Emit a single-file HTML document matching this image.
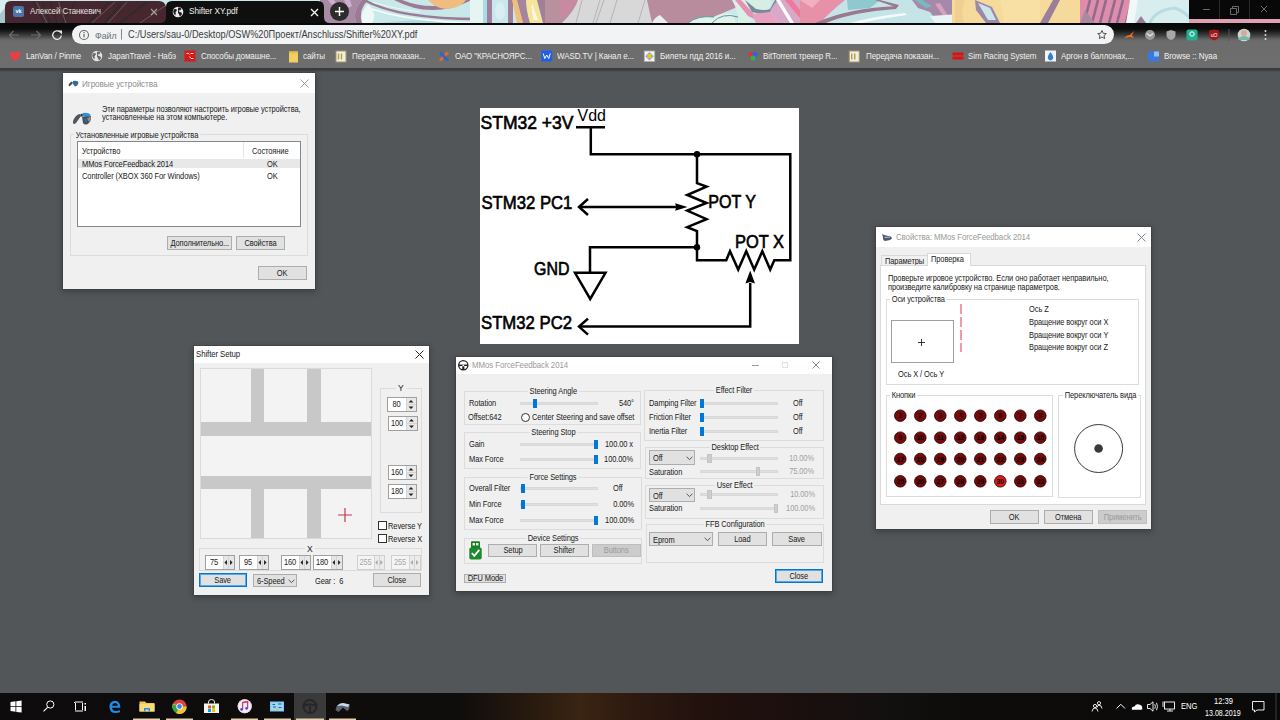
<!DOCTYPE html>
<html><head><meta charset="utf-8">
<style>
*{margin:0;padding:0;box-sizing:border-box}
html,body{width:1280px;height:720px;overflow:hidden;background:#525659;font-family:"Liberation Sans",sans-serif;position:relative}
.a{position:absolute}
.t{position:absolute;white-space:nowrap;line-height:1}
/* chrome */
#toolbar{left:0;top:23px;width:1280px;height:45px;background:linear-gradient(180deg,#080808 0,#0c0c0c 6px,#3a3a3a 12px,#626262 16px,#6c6c6c 18px,#6e6e6e 45px)}
#bmline{left:0;top:68px;width:1280px;height:4px;background:linear-gradient(180deg,#383b3e 0,#3a3d40 2px,#484b4e 3px,#525659 4px)}
.bm{color:#f0f0f0;font-size:9px;top:51.5px;letter-spacing:-0.1px;transform:scaleX(0.89);transform-origin:0 0}
.dlg{position:absolute;background:#f0f0f0;box-shadow:0 0 0 1px rgba(50,50,50,0.3),0 2px 6px 1px rgba(0,0,0,0.25)}
.tb{position:absolute;left:0;top:0;right:0;background:#fff}
.f{position:absolute;white-space:nowrap;line-height:1;font-size:8.6px;letter-spacing:-0.1px;color:#1a1a1a;transform:scaleX(0.87);transform-origin:0 0}
.fr{transform-origin:100% 0}
.fc{transform-origin:50% 0}
.sx{display:inline-block;transform:scaleX(0.87)}
.gb{position:absolute;border:1px solid #dcdcdc}
.gt{position:absolute;background:#f0f0f0;padding:0 2px;font-size:8.6px;letter-spacing:-0.1px;color:#1a1a1a;line-height:1;white-space:nowrap}
.btn{position:absolute;white-space:nowrap;background:#e1e1e1;border:1px solid #adadad;font-size:8.6px;letter-spacing:-0.1px;line-height:1;color:#1a1a1a;text-align:center;display:flex;align-items:center;justify-content:center}
.btn.def{border:1px solid #0078d7;box-shadow:inset 0 0 0 1px #5aa8e8}
.btn.dis{background:#cccccc;border-color:#bfbfbf;color:#9a9a9a}
.trk{position:absolute;height:3px;background:#e2e2e2;border:0}
.thb{position:absolute;width:4px;height:9px;background:#0078d7}
.thg{position:absolute;width:4px;height:9px;background:#cfcfcf;border:1px solid #bdbdbd}
.combo{position:absolute;background:#e1e1e1;border:1px solid #adadad;font-size:8.4px;color:#202020;padding-left:3px;display:flex;align-items:center}
.spin{position:absolute;background:#fff;border:1px solid #a8a8a8;font-size:8.2px;color:#202020}
</style></head><body>

<!-- title bar -->
<svg class="a" style="left:0;top:0" width="1280" height="23" viewBox="0 0 1280 23">
 <rect width="1280" height="23" fill="#cce8ea"/>
 <rect x="0" y="0" width="8" height="23" fill="#d8eeee"/>
 <path d="M0 14L8 4L8 23L0 23Z" fill="#a8c8c8"/>
 <!-- 320-440 -->
 <rect x="320" y="0" width="165" height="23" fill="#c8e8ea"/>
 <path d="M320 0H362Q352 10 356 23H320Z" fill="#a88aa4"/>
 <path d="M328 0H334L340 8L336 10Z M344 0H350L352 6L348 8Z" fill="#cdb0d0"/>
 <path d="M356 23Q352 10 362 0H368Q358 10 362 23Z" fill="#9a7a94"/>
 <path d="M362 23Q360 12 368 4Q378 14 372 23Z" fill="#eef8f6"/>
 <path d="M394 0Q432 20 472 0H464Q432 12 402 0Z" fill="#9c7a94"/>
 <path d="M428 0Q436 9 448 9Q462 7 466 0Z" fill="#f0bc80"/>
 <path d="M364 0Q400 20 487 19" stroke="#9c7a94" stroke-width="2.4" fill="none"/>
 <path d="M372 9Q410 22 480 23" stroke="#f4fbfa" stroke-width="1.6" fill="none"/>
 <path d="M372 2Q390 8 420 12" stroke="#e8f6f6" stroke-width="1.2" fill="none"/>
 <path d="M380 23Q420 18 445 23Z" fill="#a8d8de"/>
 <rect x="470" y="0" width="16" height="23" fill="#e6f4f2"/>
 <rect x="483" y="0" width="4" height="23" fill="#a8dce4"/>
 <rect x="487" y="0" width="5" height="23" fill="#a07e9c"/>
 <path d="M492 0H510V23H492Z" fill="#c8e8ec"/>
 <ellipse cx="500" cy="11" rx="5" ry="9" fill="#d8eef2"/>
 <rect x="508" y="0" width="5" height="23" fill="#a07e9c"/>
 <path d="M512 0H517L523 23H517Z" fill="#f0c078"/>
 <path d="M517 0H527L531 23H523Z" fill="#a6849e"/>
 <path d="M526 0H537L543 23H530Q526 10 526 0Z" fill="#f6e49c"/>
 <path d="M532 3Q535 12 538 20L534 20Q531 12 532 3Z" fill="#fff8e0"/>
 <path d="M537 0H545L551 23H543Z" fill="#a08098"/>
 <rect x="545" y="0" width="33" height="23" fill="#b8909e"/>
 <!-- 560-680 -->
 <path d="M578 0Q572 12 560 20V0Z" fill="#c88aa0"/>
 <path d="M578 0H648L652 23H562Q575 10 578 0Z" fill="#d8d8d8"/>
 <path d="M582 0L576 23M600 0L593 23M604 0L596 23M617 0L610 23M645 0L638 23" stroke="#b0b0b0" stroke-width="0.9"/>
 <path d="M647 0H740L735 8Q720 14 700 23H652Z" fill="#b88c9c"/>
 <path d="M652 23Q655 17 660 15L668 23Z" fill="#e8f0ee"/>
 <!-- 680-800 -->
 <path d="M688 23Q698 15 714 17Q722 12 732 14Q735 18 736 23Z" fill="#e0f2ea"/>
 <path d="M688 23Q698 15 714 17M712 23Q722 12 738 17" stroke="#5a98a0" stroke-width="1" fill="none"/>
 <path d="M732 0H745Q748 6 752 12L760 14L748 23H738Q740 14 732 0Z" fill="#d8f0e8"/>
 <path d="M735 0H741L755 15L770 23H762L748 16Z" fill="#e890b0"/>
 <path d="M744 0H770Q772 6 768 10Q758 12 752 8Z" fill="#d6eee6"/>
 <path d="M745 0L756 9Q765 11 770 9L775 0H778L772 12L760 14L752 12Z" fill="#7a8a98"/>
 <path d="M752 14L770 12L778 23H756Z" fill="#e8a0c0"/>
 <path d="M770 12Q772 6 778 0H800V23H778Z" fill="#d8a8c8"/>
 <path d="M776 0H780L794 23H790Z" fill="#ffffff"/>
 <path d="M785 0H792L800 10V18Z" fill="#f07898"/>
 <!-- 800-960 -->
 <rect x="800" y="0" width="48" height="23" fill="#e890a8"/>
 <path d="M800 0H820L812 8Z" fill="#f0b0c0"/>
 <path d="M845 0H935V23H820Q830 12 845 0Z" fill="#c4e4e8"/>
 <path d="M815 23Q848 8 898 6L896 9Q852 12 826 23Z" fill="#9a7890"/>
 <path d="M850 23Q875 16 905 13L907 15Q878 19 862 23Z" fill="#f2fafa"/>
 <path d="M847 0H880L870 8L848 10Z" fill="#8ec8d0"/>
 <path d="M875 0L897 7.5L899 5L880 0Z" fill="#9a7890"/>
 <path d="M912 0H956V23H938L930 12L918 8Z" fill="#a48aa8"/>
 <path d="M935 4L940 3L948 16L944 17Z" fill="#d8a0c0"/>
 <path d="M915 0L922 0L932 6L926 8Z" fill="#78b8c0"/>
 <path d="M930 16L960 14L975 23H935Z" fill="#e8f4f6"/>
 <!-- yellow -->
 <rect x="952" y="0" width="133" height="23" fill="#f6da9c"/>
 <path d="M955 0H965Q960 10 964 23H955Z" fill="#f0d090"/>
 <path d="M975 0L992 7L1000 23H986L976 10Z" fill="#9a8aa8"/>
 <path d="M978 3L990 8L996 20L988 20Z" fill="#cce4ec"/>
 <path d="M1000 0H1040V23H1004Z" fill="#f8e0a4"/>
 <path d="M1040 23L1053 0H1060L1048 23Z" fill="#9a7e9a"/>
 <!-- stripes -->
 <rect x="1080" y="0" width="56" height="23" fill="#e08cac"/>
 <path d="M1084 23L1090 0M1092 23L1098 0M1100 23L1106 0M1109 23L1115 0M1117 23L1123 0M1126 23L1132 0" stroke="#8e6c8c" stroke-width="2.6"/><path d="M1080 23L1085 10L1095 23Z" fill="#a88aa0"/>
 <rect x="1132" y="0" width="58" height="23" fill="#d8eeee"/>
 <path d="M1130 0H1138L1134 23H1126Z" fill="#f0f8f8"/>
 <path d="M1150 23Q1155 10 1175 8Q1185 12 1190 18" stroke="#b8dce4" stroke-width="3" fill="none"/><path d="M1136 23L1141 16L1146 23Z" fill="#9a7a98"/>
 <!-- window controls -->
 <rect x="1189" y="0" width="91" height="19" fill="#080808"/>
 <rect x="1189" y="19" width="91" height="4" fill="#e0a0b4"/>
 <rect x="1219" y="0" width="1" height="19" fill="#2a2a2a"/>
 <rect x="1249" y="0" width="1" height="19" fill="#2a2a2a"/>
 <rect x="1203" y="9" width="7" height="1" fill="#6a6a6a"/>
 <path d="M1230.5 8.5H1236.5V14.5H1230.5Z M1232.5 8.5V6.5H1238.5V12.5H1236.5" fill="none" stroke="#6a6a6a" stroke-width="1"/>
 <path d="M1261 6L1267 12M1267 6L1261 12" stroke="#6a6a6a" stroke-width="1"/>
 <!-- inactive tab -->
 <path d="M5 23V7Q5 1 11 1H159Q165 1 166 7V23Z" fill="#47272f"/>
 <path d="M33.5 2L44 23M42.5 2L50 23M50.5 2L57 23M62 23L75.5 2M88 23L109 2M104 23L123 2M120 23L147 2" stroke="#2e2a2c" stroke-width="1.6"/>
 <path d="M36.5 2L47 23M58.5 2L66 23M92 23L115 2M108 23L127 2M140 23L165 6" stroke="#6a5e62" stroke-width="0.9"/>
 <!-- active tab -->
 <path d="M160 23Q166 23 166 17V7Q166 1 172 1H318Q324 1 324 7V17Q324 23 330 23Z" fill="#0f0f0f"/>
</svg>
<div class="a" style="left:13px;top:6px;width:11px;height:11px;background:#4a76a8;border-radius:2px;color:#fff;font-size:5.5px;font-weight:bold;text-align:center;line-height:11px">vk</div>
<div class="t" style="left:29.5px;top:6.5px;font-size:9.2px;letter-spacing:-0.1px;color:#e8e0e0;transform:scaleX(0.87);transform-origin:0 0">Алексей Станкевич</div>
<svg class="a" style="left:150px;top:8px" width="8" height="8"><path d="M1 1L7 7M7 1L1 7" stroke="#a8a0a0" stroke-width="1.1"/></svg>
<svg class="a" style="left:172px;top:6px" width="12" height="12" viewBox="0 0 12 12"><circle cx="6" cy="6" r="5.3" fill="#ececec"/><path d="M2.2 3.2Q3.5 2.5 4.8 3.5Q5.2 5 4 5.5Q3 6.2 3.8 7.5L3.2 9.5Q1 7.5 1.2 5Z M6.5 1.2Q8.5 1.5 9.5 3L8 4.5Q7 3.8 6.5 4.8Q7.2 6.5 9 6.2Q10.2 6.8 9.8 8.5Q8.8 10 7.5 10.5Q7.8 8.8 6.8 8Q5.8 7 6 5.5Q5.5 3.2 6.5 1.2Z" fill="#1a1a1a"/></svg>
<div class="t" style="left:189px;top:6.5px;font-size:9.2px;letter-spacing:-0.1px;color:#f0f0f0;transform:scaleX(0.9);transform-origin:0 0">Shifter XY.pdf</div>
<svg class="a" style="left:310px;top:7.5px" width="9" height="9"><path d="M1 1L8 8M8 1L1 8" stroke="#f0f0f0" stroke-width="1.4"/></svg>
<div class="a" style="left:330px;top:2px;width:19px;height:19px;border-radius:50%;background:#2c2c2c"></div>
<svg class="a" style="left:334px;top:6px" width="11" height="11"><path d="M5.5 1V10M1 5.5H10" stroke="#fff" stroke-width="1.5"/></svg>

<!-- toolbar -->
<div id="toolbar" class="a"></div>
<div id="bmline" class="a"></div>
<svg class="a" style="left:0;top:23px" width="1280" height="45" viewBox="0 23 1280 45">
 <path d="M19 35H9.5M13.5 31L9.5 35L13.5 39" stroke="#6e6e6e" stroke-width="1.1" fill="none"/>
 <path d="M31 35H40.5M36.5 31L40.5 35L36.5 39" stroke="#6e6e6e" stroke-width="1.1" fill="none"/>
 <path d="M61.3 35.5A4.3 4.3 0 1 1 60 32" stroke="#e8e8e8" stroke-width="1.3" fill="none"/><path d="M58 30.5H62V34.5Z" fill="#e8e8e8"/>
 <rect x="72" y="25" width="1042" height="19" rx="9.5" fill="#f1f3f4"/>
 <circle cx="84" cy="35" r="4.5" fill="none" stroke="#666" stroke-width="1.1"/><rect x="83.4" y="34" width="1.2" height="3.3" fill="#666"/><rect x="83.4" y="32" width="1.2" height="1.2" fill="#666"/>
 <rect x="121" y="29" width="0.9" height="10.6" fill="#7a7a7a"/>
 <path d="M1102 30.5L1103.3 33.3L1106.3 33.6L1104 35.6L1104.7 38.6L1102 37L1099.3 38.6L1100 35.6L1097.7 33.6L1100.7 33.3Z" fill="none" stroke="#555" stroke-width="1"/>
 <path d="M1124 38Q1127 35 1130 35L1134 31L1132 35.5L1134 38L1130 37Z" fill="#f07020"/>
 <circle cx="1150" cy="35" r="5" fill="#9a9a9a"/><path d="M1147 33.5L1150 36L1153 33.5" stroke="#e8e8e8" stroke-width="1.2" fill="none"/>
 <path d="M1171 30L1175.5 31.5V35Q1175.5 38.5 1171 40Q1166.5 38.5 1166.5 35V31.5Z" fill="#a8a8a8"/>
 <rect x="1186.5" y="29.5" width="11" height="11" rx="2" fill="#20b090"/><circle cx="1192" cy="34" r="2.2" fill="none" stroke="#fff" stroke-width="1"/>
 <path d="M1209 30.5L1214 29.5L1219 30.5V35Q1219 39 1214 40.5Q1209 39 1209 35Z" fill="#a01818"/><text x="1214" y="37" font-family="Liberation Sans" font-size="5" fill="#fff" text-anchor="middle">uO</text>
 <rect x="1228.5" y="29" width="1" height="12" fill="#555"/>
 <circle cx="1244" cy="35" r="6.3" fill="#c8d8d0"/><circle cx="1244" cy="33" r="3" fill="#d8a898"/><path d="M1238.5 38Q1244 34 1249.5 38V40H1238.5Z" fill="#78b8a8"/>
 <circle cx="1265.5" cy="31" r="1" fill="#ddd"/><circle cx="1265.5" cy="35" r="1" fill="#ddd"/><circle cx="1265.5" cy="39" r="1" fill="#ddd"/>
</svg>
<div class="t" style="left:95px;top:30.5px;font-size:9.6px;color:#707070;transform:scaleX(0.92);transform-origin:0 0">Файл</div>
<div class="t" style="left:128px;top:30px;font-size:10px;color:#3c3c3c;transform:scaleX(0.92);transform-origin:0 0">C:/Users/sau-0/Desktop/OSW%20Проект/Anschluss/Shifter%20XY.pdf</div>

<!-- bookmarks -->
<svg class="a" style="left:0;top:44px" width="1280" height="24" viewBox="0 44 1280 24">
 <g transform="translate(9 50.5)"><path d="M1 4Q1 1 4 1Q6 1 6.5 3Q7 1 9 1Q12 1 11.5 4Q11 7 6 11Q1 7 1 4Z" fill="#e84040"/></g>
 <g transform="translate(91 50)"><circle cx="6" cy="6" r="5.3" fill="#e4e4e4"/><path d="M2.2 3.2Q3.5 2.5 4.8 3.5Q5.2 5 4 5.5Q3 6.2 3.8 7.5L3.2 9.5Q1 7.5 1.2 5Z M6.5 1.2Q8.5 1.5 9.5 3L8 4.5Q7 3.8 6.5 4.8Q7.2 6.5 9 6.2Q10.2 6.8 9.8 8.5Q8.8 10 7.5 10.5Q7.8 8.8 6.8 8Q5.8 7 6 5.5Q5.5 3.2 6.5 1.2Z" fill="#666"/></g>
 <g transform="translate(184.5 50.5)"><rect x="0" y="0" width="11" height="11" fill="#d81818"/><path d="M2 3Q4 2 5 4M6 3H9M5 6Q6 9 9 8" stroke="#fff" stroke-width="0.9" fill="none"/></g>
 <g transform="translate(288 50.5)"><rect x="1" y="1" width="9" height="11" fill="#f2d060"/><rect x="1" y="1" width="9" height="2" fill="#e8c040"/></g>
 <g transform="translate(335.5 50.5)"><rect x="0.5" y="0.5" width="10" height="11" fill="#f0f0e8" stroke="#a09870" stroke-width="1"/><path d="M3 3V9M6 3V9" stroke="#c0a030" stroke-width="1.5"/></g>
 <g transform="translate(438 50.5)"><path d="M1 9L9 1L11 3L3 11Z" fill="#e86820"/><path d="M1 3L3 1L11 9L9 11Z" fill="#2868c8"/></g>
 <g transform="translate(541.25 50.5)"><rect x="0" y="0" width="11" height="11" rx="1" fill="#2060e8"/><path d="M2 3L3.5 8L5.5 4.5L7.5 8L9 3" stroke="#fff" stroke-width="1" fill="none"/></g>
 <g transform="translate(643.75 50.5)"><rect x="0.5" y="0.5" width="10.5" height="10.5" fill="#f4f4f4" stroke="#aaa" stroke-width="0.8"/><path d="M5.75 1.5L10 5.75L5.75 10L1.5 5.75Z" fill="#7aa8d8"/><circle cx="5.75" cy="5.75" r="2.4" fill="#f0c020"/></g>
 <g transform="translate(747.5 50.5)"><circle cx="3.5" cy="4" r="2.5" fill="#e83030"/><circle cx="7.5" cy="4" r="2.5" fill="#3060e8"/><circle cx="5.5" cy="7.5" r="2.5" fill="#30b050"/></g>
 <g transform="translate(848.75 50.5)"><rect x="0.5" y="0.5" width="10" height="11" fill="#f0f0e8" stroke="#a09870" stroke-width="1"/><path d="M3 3V9M6 3V9" stroke="#c0a030" stroke-width="1.5"/></g>
 <g transform="translate(952.5 50.5)"><rect x="0" y="2" width="11" height="3" fill="#e01010"/><rect x="0" y="6" width="11" height="3" fill="#e01010"/></g>
 <g transform="translate(1045 50.5)"><rect x="0" y="0" width="11" height="11" fill="#f0f4f8"/><path d="M5.5 1.5Q9 6 8 8Q7 10 5.5 10Q4 10 3 8Q2 6 5.5 1.5Z" fill="#3080d8"/></g>
 <g transform="translate(1148 50.5)"><rect x="0" y="1" width="11" height="10" fill="#3a78e0"/><rect x="6" y="1" width="5" height="5" fill="#90c0f8"/></g>
</svg>
<div class="t bm" style="left:25.5px">LanVan / Pinme</div>
<div class="t bm" style="left:107.5px">JapanTravel - Набэ</div>
<div class="t bm" style="left:200.5px">Способы домашне...</div>
<div class="t bm" style="left:303px">сайты</div>
<div class="t bm" style="left:352px">Передача показан...</div>
<div class="t bm" style="left:454.5px">ОАО "КРАСНОЯРС...</div>
<div class="t bm" style="left:557px">WASD.TV | Канал е...</div>
<div class="t bm" style="left:659.5px">Билеты пдд 2016 и...</div>
<div class="t bm" style="left:762.5px">BitTorrent трекер R...</div>
<div class="t bm" style="left:865.5px">Передача показан...</div>
<div class="t bm" style="left:967.5px">Sim Racing System</div>
<div class="t bm" style="left:1061.25px">Аргон в баллонах,...</div>
<div class="t bm" style="left:1163.75px">Browse :: Nyaa</div>

<!-- PDF page -->
<div class="a" style="left:480px;top:108px;width:319px;height:236px;background:#fff"></div>

<svg class="a" style="left:0;top:0" width="1280" height="720" viewBox="0 0 1280 720">
<g fill="none" stroke="#000" stroke-width="2.5" stroke-linejoin="miter" stroke-linecap="butt">
<path d="M576 127.2H605M590.8 127V154.2H790.3V260.25H774.3L770.2 269.6L762.3 251.25L754.2 269.6L746.25 251.25L738.2 269.6L730 251.25L726.25 260.25H697V231L687.2 227.2L706.6 219.2L687.2 210.6L706.6 203L687.2 195L706.6 186.7L697 183.1V154.2"/>
<path d="M697 247.3H590V272.8"/>
<path d="M575 272.8H605.5L590.2 299Z"/>
<path d="M579 207H679"/>
<path d="M588 199L579 207L588 215"/>
<path d="M579 326.6H750.2V283"/>
<path d="M588 318.6L579 326.6L588 334.6"/>
</g>
<circle cx="697" cy="154.2" r="3.2"/>
<circle cx="697" cy="247.3" r="3.2"/>
<path d="M687.5 207L675 203.2Q677 207 675 210.8Z"/>
<path d="M750.2 270.4L755 283.5L750.2 282L745.4 283.5Z"/>
<g font-family="Liberation Sans" font-weight="normal" font-size="17.5" fill="#000" stroke="#000" stroke-width="0.6">
<text x="480.5" y="129" textLength="93" lengthAdjust="spacingAndGlyphs">STM32 +3V</text>
<text x="481.4" y="209.3" textLength="91" lengthAdjust="spacingAndGlyphs">STM32 PC1</text>
<text x="534" y="274.6" textLength="35.4" lengthAdjust="spacingAndGlyphs">GND</text>
<text x="481" y="328.9" textLength="91" lengthAdjust="spacingAndGlyphs">STM32 PC2</text>
<text x="708.3" y="208" textLength="47.7" lengthAdjust="spacingAndGlyphs">POT Y</text>
<text x="735" y="247.8" textLength="49" lengthAdjust="spacingAndGlyphs">POT X</text>
</g>
<text x="577.5" y="121" font-family="Liberation Sans" font-size="16.5" fill="#000" textLength="28.5" lengthAdjust="spacingAndGlyphs">Vdd</text>
</svg>


<!-- Dialog 1: game controllers -->
<div class="dlg" style="left:63px;top:73px;width:252px;height:216px">
 <div class="tb" style="height:20px"></div>
 <svg class="a" style="left:5px;top:6.5px" width="11" height="7" viewBox="0 0 11 7"><path d="M0.5 5Q1.5 2 4 1.5L5 3L2 6Q0.5 6.5 0.5 5Z" fill="#404850"/><path d="M5 1Q8 0 10.5 2Q10 6 7 6.5L5 4Z" fill="#3a6a90"/></svg>
 <div class="f" style="left:19px;top:5.8px;color:#8e8e8e;font-size:9.4px">Игровые устройства</div>
 <svg class="a" style="left:237px;top:5.5px" width="9" height="9"><path d="M0.5 0.5L8.5 8.5M8.5 0.5L0.5 8.5" stroke="#909090" stroke-width="0.9"/></svg>
 <svg class="a" style="left:8.5px;top:38.5px" width="20" height="14" viewBox="0 0 20 14"><path d="M1 11Q0.5 8 4 4Q6 2 8 2L9 4L4 11Q2 13 1 11Z" fill="#50565c"/><path d="M8 3L10 1.5L12 3L10 5Z" fill="#303030"/><path d="M11 1Q16 0 19 3L15 6L10 4Z" fill="#3090e0"/><path d="M10 5L19 4Q19.5 10 15 12.5Q12 13 11 11Z" fill="#4a5058"/><path d="M15 6.5L19 4.5Q19 8 17 10Z" fill="#a08a78"/><path d="M12 7L16 7L14 11Z" fill="#2a6a98"/></svg>
 <div class="f" style="left:39px;top:32px">Эти параметры позволяют настроить игровые устройства,</div>
 <div class="f" style="left:39px;top:40px">установленные на этом компьютере.</div>
 <div class="gb" style="left:7px;top:61px;width:238px;height:122px"></div>
 <div class="gt" style="left:11px;top:58px;transform:scaleX(0.87);transform-origin:0 0">Установленные игровые устройства</div>
 <div class="a" style="left:14px;top:68px;width:224px;height:86px;background:#fff;border:1px solid #828790"></div>
 <div class="a" style="left:180px;top:69px;width:1px;height:16px;background:#e5e5e5"></div>
 <div class="f" style="left:19px;top:74px">Устройство</div>
 <div class="f" style="left:189px;top:74px">Состояние</div>
 <div class="a" style="left:15px;top:86px;width:222px;height:9px;background:#e8e8e8"></div>
 <div class="f" style="left:19px;top:87px">MMos ForceFeedback 2014</div>
 <div class="f" style="left:204px;top:87px">OK</div>
 <div class="f" style="left:19px;top:99px">Controller (XBOX 360 For Windows)</div>
 <div class="f" style="left:204px;top:99px">OK</div>
 <div class="btn" style="left:104px;top:163px;width:65px;height:14px"><span class="sx">Дополнительно...</span></div>
 <div class="btn" style="left:173px;top:163px;width:49px;height:14px"><span class="sx">Свойства</span></div>
 <div class="btn" style="left:195px;top:193px;width:49px;height:14px"><span class="sx">OK</span></div>
</div>



<!-- Shifter setup -->
<div class="dlg" style="left:194px;top:346px;width:235px;height:249px">
 <div class="tb" style="height:17px"></div>
 <div class="f" style="left:2px;top:4.3px;font-size:9px;color:#222;transform:scaleX(0.87)">Shifter Setup</div>
 <svg class="a" style="left:221px;top:4px" width="9" height="9"><path d="M0.5 0.5L8.5 8.5M8.5 0.5L0.5 8.5" stroke="#222" stroke-width="1"/></svg>
 <div class="a" style="left:6px;top:22px;width:172px;height:171px;background:#f3f3f3;border:1px solid #dadada"></div>
 <div class="a" style="left:7px;top:76px;width:170px;height:14px;background:#c8c8c8"></div>
 <div class="a" style="left:7px;top:130px;width:170px;height:13px;background:#c8c8c8"></div>
 <div class="a" style="left:57px;top:23px;width:13px;height:53px;background:#c8c8c8"></div>
 <div class="a" style="left:113px;top:23px;width:14px;height:53px;background:#c8c8c8"></div>
 <div class="a" style="left:57px;top:143px;width:13px;height:49px;background:#c8c8c8"></div>
 <div class="a" style="left:113px;top:143px;width:14px;height:49px;background:#c8c8c8"></div>
 <svg class="a" style="left:143px;top:161px" width="16" height="16"><path d="M1 8H15M8 1V15" stroke="#c83848" stroke-width="1.2"/></svg>
 <div class="gb" style="left:186px;top:42px;width:42px;height:125px"></div>
 <div class="gt" style="left:202px;top:38px">Y</div>
<div class="a" style="left:193px;top:51px;width:30px;height:15px;background:#fff;border:1px solid #a0a0a0"></div>
 <div class="f fc" style="left:193px;top:53.6px;width:19px;text-align:center">80</div>
 <div class="a" style="left:212px;top:52px;width:10px;height:13px;background:#e8e8e8;border-left:1px solid #d4d4d4"></div>
 <div class="a" style="left:212px;top:58px;width:10px;height:1px;background:#d4d4d4"></div>
 <svg class="a" style="left:212px;top:52px" width="10" height="13"><path d="M2.5 4.45L5.0 1.95L7.5 4.45Z M2.5 8.55L5.0 11.05L7.5 8.55Z" fill="#222"/></svg>
<div class="a" style="left:194px;top:70px;width:30px;height:15px;background:#fff;border:1px solid #a0a0a0"></div>
 <div class="f fc" style="left:194px;top:72.6px;width:18px;text-align:center">100</div>
 <div class="a" style="left:212px;top:71px;width:11px;height:13px;background:#e8e8e8;border-left:1px solid #d4d4d4"></div>
 <div class="a" style="left:212px;top:77px;width:11px;height:1px;background:#d4d4d4"></div>
 <svg class="a" style="left:212px;top:71px" width="11" height="13"><path d="M3.0 4.45L5.5 1.95L8.0 4.45Z M3.0 8.55L5.5 11.05L8.0 8.55Z" fill="#222"/></svg>
<div class="a" style="left:194px;top:119px;width:29px;height:15px;background:#fff;border:1px solid #a0a0a0"></div>
 <div class="f fc" style="left:194px;top:121.6px;width:18px;text-align:center">160</div>
 <div class="a" style="left:212px;top:120px;width:10px;height:13px;background:#e8e8e8;border-left:1px solid #d4d4d4"></div>
 <div class="a" style="left:212px;top:126px;width:10px;height:1px;background:#d4d4d4"></div>
 <svg class="a" style="left:212px;top:120px" width="10" height="13"><path d="M2.5 4.45L5.0 1.95L7.5 4.45Z M2.5 8.55L5.0 11.05L7.5 8.55Z" fill="#222"/></svg>
<div class="a" style="left:194px;top:138px;width:29px;height:15px;background:#fff;border:1px solid #a0a0a0"></div>
 <div class="f fc" style="left:194px;top:140.6px;width:18px;text-align:center">180</div>
 <div class="a" style="left:212px;top:139px;width:10px;height:13px;background:#e8e8e8;border-left:1px solid #d4d4d4"></div>
 <div class="a" style="left:212px;top:145px;width:10px;height:1px;background:#d4d4d4"></div>
 <svg class="a" style="left:212px;top:139px" width="10" height="13"><path d="M2.5 4.45L5.0 1.95L7.5 4.45Z M2.5 8.55L5.0 11.05L7.5 8.55Z" fill="#222"/></svg>

 <div class="a" style="left:184px;top:175px;width:9px;height:9px;background:#fff;border:1px solid #333"></div>
 <div class="f" style="left:194px;top:176px">Reverse Y</div>
 <div class="a" style="left:184px;top:188px;width:9px;height:9px;background:#fff;border:1px solid #333"></div>
 <div class="f" style="left:194px;top:189px">Reverse X</div>
 <div class="gb" style="left:5px;top:202px;width:223px;height:23px"></div>
 <div class="gt" style="left:111px;top:199px">X</div>
<div class="a" style="left:11px;top:209px;width:30px;height:15px;background:#fff;border:1px solid #a0a0a0"></div>
 <div class="f fc" style="left:11px;top:211.6px;width:18px;text-align:center;color:#222">75</div>
 <div class="a" style="left:29px;top:210px;width:11px;height:13px;background:#e6e6e6;border-left:1px solid #d4d4d4"></div>
 <div class="a" style="left:34px;top:210px;width:1px;height:13px;background:#d4d4d4"></div>
 <svg class="a" style="left:29px;top:210px" width="11" height="13"><path d="M3.95 4.0L1.45 6.5L3.95 9.0Z M7.05 4.0L9.55 6.5L7.05 9.0Z" fill="#222"/></svg>
<div class="a" style="left:45px;top:209px;width:30px;height:15px;background:#fff;border:1px solid #a0a0a0"></div>
 <div class="f fc" style="left:45px;top:211.6px;width:18px;text-align:center;color:#222">95</div>
 <div class="a" style="left:63px;top:210px;width:11px;height:13px;background:#e6e6e6;border-left:1px solid #d4d4d4"></div>
 <div class="a" style="left:68px;top:210px;width:1px;height:13px;background:#d4d4d4"></div>
 <svg class="a" style="left:63px;top:210px" width="11" height="13"><path d="M3.95 4.0L1.45 6.5L3.95 9.0Z M7.05 4.0L9.55 6.5L7.05 9.0Z" fill="#222"/></svg>
<div class="a" style="left:87px;top:209px;width:30px;height:15px;background:#fff;border:1px solid #a0a0a0"></div>
 <div class="f fc" style="left:87px;top:211.6px;width:18px;text-align:center;color:#222">160</div>
 <div class="a" style="left:105px;top:210px;width:11px;height:13px;background:#e6e6e6;border-left:1px solid #d4d4d4"></div>
 <div class="a" style="left:110px;top:210px;width:1px;height:13px;background:#d4d4d4"></div>
 <svg class="a" style="left:105px;top:210px" width="11" height="13"><path d="M3.95 4.0L1.45 6.5L3.95 9.0Z M7.05 4.0L9.55 6.5L7.05 9.0Z" fill="#222"/></svg>
<div class="a" style="left:119px;top:209px;width:30px;height:15px;background:#fff;border:1px solid #a0a0a0"></div>
 <div class="f fc" style="left:119px;top:211.6px;width:18px;text-align:center;color:#222">180</div>
 <div class="a" style="left:137px;top:210px;width:11px;height:13px;background:#e6e6e6;border-left:1px solid #d4d4d4"></div>
 <div class="a" style="left:142px;top:210px;width:1px;height:13px;background:#d4d4d4"></div>
 <svg class="a" style="left:137px;top:210px" width="11" height="13"><path d="M3.95 4.0L1.45 6.5L3.95 9.0Z M7.05 4.0L9.55 6.5L7.05 9.0Z" fill="#222"/></svg>
<div class="a" style="left:163px;top:209px;width:28px;height:15px;background:#f4f4f4;border:1px solid #d0d0d0"></div>
 <div class="f fc" style="left:163px;top:211.6px;width:17px;text-align:center;color:#a8a8a8">255</div>
 <div class="a" style="left:180px;top:210px;width:10px;height:13px;background:#ececec;border-left:1px solid #d4d4d4"></div>
 <div class="a" style="left:185px;top:210px;width:1px;height:13px;background:#d4d4d4"></div>
 <svg class="a" style="left:180px;top:210px" width="10" height="13"><path d="M3.7 4.0L1.2 6.5L3.7 9.0Z M6.3 4.0L8.8 6.5L6.3 9.0Z" fill="#a8a8a8"/></svg>
<div class="a" style="left:197px;top:209px;width:30px;height:15px;background:#f4f4f4;border:1px solid #d0d0d0"></div>
 <div class="f fc" style="left:197px;top:211.6px;width:18px;text-align:center;color:#a8a8a8">255</div>
 <div class="a" style="left:215px;top:210px;width:11px;height:13px;background:#ececec;border-left:1px solid #d4d4d4"></div>
 <div class="a" style="left:220px;top:210px;width:1px;height:13px;background:#d4d4d4"></div>
 <svg class="a" style="left:215px;top:210px" width="11" height="13"><path d="M3.95 4.0L1.45 6.5L3.95 9.0Z M7.05 4.0L9.55 6.5L7.05 9.0Z" fill="#a8a8a8"/></svg>

 <div class="btn def" style="left:5px;top:227px;width:48px;height:14px"><span class="sx">Save</span></div>
<div class="a" style="left:59px;top:228px;width:44px;height:13px;background:#e1e1e1;border:1px solid #adadad"></div>
 <div class="f" style="left:63px;top:231.0px">6-Speed</div>
 <svg class="a" style="left:93.5px;top:232.5px" width="7" height="5"><path d="M0.6 0.8L3.5 3.6L6.4 0.8" fill="none" stroke="#444" stroke-width="0.9"/></svg>

 <div class="f" style="left:121px;top:231px">Gear :&nbsp; 6</div>
 <div class="btn" style="left:179px;top:227px;width:48px;height:14px"><span class="sx">Close</span></div>
</div>

<!-- MMos FF -->
<div class="dlg" style="left:456px;top:357px;width:376px;height:234px">
 <div class="tb" style="height:17px"></div>
 <svg class="a" style="left:2px;top:3px" width="11" height="11" viewBox="0 0 11 11"><circle cx="5.3" cy="5.3" r="4.6" fill="none" stroke="#222" stroke-width="1.3"/><path d="M0.8 5.3H9.8" stroke="#222" stroke-width="1.5"/><path d="M4.5 5.5L6.1 5.5L6.6 9.9H4Z" fill="#222"/><circle cx="5.3" cy="5.4" r="0.9" fill="#fff"/></svg>
 <div class="f" style="left:16px;top:4.3px;font-size:9px;color:#9a9a9a;transform:scaleX(0.875)">MMos ForceFeedback 2014</div>
 <div class="a" style="left:296px;top:8px;width:7px;height:1px;background:#999"></div>
 <div class="a" style="left:326px;top:5px;width:6px;height:6px;border:1px solid #e0e0e0"></div>
 <svg class="a" style="left:356px;top:4px" width="8" height="8"><path d="M0.5 0.5L7.5 7.5M7.5 0.5L0.5 7.5" stroke="#888" stroke-width="1"/></svg>
 <div class="gb" style="left:8px;top:34px;width:177px;height:34px"></div>
 <div class="gt" style="left:37px;top:30px;width:120px;text-align:center;background:transparent"><span style="background:#f0f0f0;padding:0 2px;display:inline-block;transform:scaleX(0.87)">Steering Angle</span></div>
 <div class="f" style="left:13px;top:41.9px;color:#1a1a1a">Rotation</div>
 <div class="a" style="left:64px;top:44.9px;width:78px;height:3px;background:#e0e0e0;border:1px solid #d8d8d8"></div>
 <div class="a" style="left:77px;top:41.9px;width:4px;height:9px;background:#0078d7"></div>
 <div class="f fr" style="left:98px;top:41.9px;width:80px;text-align:right;color:#1a1a1a">540°</div>
 <div class="f" style="left:12px;top:55.5px;color:#1a1a1a">Offset:642</div>
 <div class="a" style="left:65px;top:56px;width:9px;height:9px;border:1px solid #333;border-radius:50%;background:#fff"></div>
 <div class="f" style="left:76px;top:55.5px;color:#1a1a1a">Center Steering and save offset</div>
 <div class="gb" style="left:8px;top:75px;width:177px;height:37px"></div>
 <div class="gt" style="left:37px;top:71px;width:120px;text-align:center;background:transparent"><span style="background:#f0f0f0;padding:0 2px;display:inline-block;transform:scaleX(0.87)">Steering Stop</span></div>
 <div class="f" style="left:13px;top:82.5px;color:#1a1a1a">Gain</div>
 <div class="a" style="left:64px;top:85.5px;width:78px;height:3px;background:#e0e0e0;border:1px solid #d8d8d8"></div>
 <div class="a" style="left:137.5px;top:82.5px;width:4px;height:9px;background:#0078d7"></div>
 <div class="f fr" style="left:97px;top:82.5px;width:80px;text-align:right;color:#1a1a1a">100.00 x</div>
 <div class="f" style="left:13px;top:98.2px;color:#1a1a1a">Max Force</div>
 <div class="a" style="left:64px;top:101.2px;width:78px;height:3px;background:#e0e0e0;border:1px solid #d8d8d8"></div>
 <div class="a" style="left:137.5px;top:98.2px;width:4px;height:9px;background:#0078d7"></div>
 <div class="f fr" style="left:97px;top:98.2px;width:80px;text-align:right;color:#1a1a1a">100.00%</div>
 <div class="gb" style="left:8px;top:120px;width:178px;height:53px"></div>
 <div class="gt" style="left:37px;top:116px;width:120px;text-align:center;background:transparent"><span style="background:#f0f0f0;padding:0 2px;display:inline-block;transform:scaleX(0.87)">Force Settings</span></div>
 <div class="f" style="left:13px;top:126.80000000000001px;color:#1a1a1a">Overall Filter</div>
 <div class="a" style="left:64px;top:129.8px;width:78px;height:3px;background:#e0e0e0;border:1px solid #d8d8d8"></div>
 <div class="a" style="left:64.5px;top:126.80000000000001px;width:4px;height:9px;background:#0078d7"></div>
 <div class="f" style="left:157px;top:126.80000000000001px;color:#1a1a1a">Off</div>
 <div class="f" style="left:13px;top:143.2px;color:#1a1a1a">Min Force</div>
 <div class="a" style="left:64px;top:146.2px;width:78px;height:3px;background:#e0e0e0;border:1px solid #d8d8d8"></div>
 <div class="a" style="left:64.5px;top:143.2px;width:4px;height:9px;background:#0078d7"></div>
 <div class="f fr" style="left:98px;top:143.2px;width:80px;text-align:right;color:#1a1a1a">0.00%</div>
 <div class="f" style="left:13px;top:159.1px;color:#1a1a1a">Max Force</div>
 <div class="a" style="left:64px;top:162.1px;width:78px;height:3px;background:#e0e0e0;border:1px solid #d8d8d8"></div>
 <div class="a" style="left:137.5px;top:159.1px;width:4px;height:9px;background:#0078d7"></div>
 <div class="f fr" style="left:98px;top:159.1px;width:80px;text-align:right;color:#1a1a1a">100.00%</div>
 <div class="gb" style="left:8px;top:181px;width:178px;height:26px"></div>
 <div class="gt" style="left:37px;top:177px;width:120px;text-align:center;background:transparent"><span style="background:#f0f0f0;padding:0 2px;display:inline-block;transform:scaleX(0.87)">Device Settings</span></div>
 <svg class="a" style="left:13px;top:183.5px" width="13" height="19" viewBox="0 0 13 19"><rect x="2" y="0.3" width="9" height="7.5" rx="1" fill="#1a7a28"/><rect x="3.5" y="2" width="2.5" height="2.5" fill="#e0f0e0"/><rect x="7" y="2" width="2.5" height="2.5" fill="#e0f0e0"/><rect x="0.3" y="6.5" width="12.4" height="12" rx="1.8" fill="#1a8a2c"/><path d="M2.8 12L5.3 14.8L10.3 8.8" fill="none" stroke="#fff" stroke-width="1.8"/></svg>
 <div class="btn " style="left:32px;top:187px;width:49px;height:13px"><span class="sx">Setup</span></div>
 <div class="btn " style="left:84px;top:187px;width:49px;height:13px"><span class="sx">Shifter</span></div>
 <div class="btn dis" style="left:136px;top:187px;width:49px;height:13px"><span class="sx">Buttons</span></div>
 <div class="btn " style="left:8px;top:217px;width:42px;height:9px"><span class="sx">DFU Mode</span></div>
 <div class="gb" style="left:188px;top:33px;width:180px;height:51px"></div>
 <div class="gt" style="left:218px;top:29px;width:120px;text-align:center;background:transparent"><span style="background:#f0f0f0;padding:0 2px;display:inline-block;transform:scaleX(0.87)">Effect Filter</span></div>
 <div class="f" style="left:193px;top:41.9px;color:#1a1a1a">Damping Filter</div>
 <div class="a" style="left:244px;top:44.9px;width:78px;height:3px;background:#e0e0e0;border:1px solid #d8d8d8"></div>
 <div class="a" style="left:244px;top:41.9px;width:4px;height:9px;background:#0078d7"></div>
 <div class="f" style="left:337px;top:41.9px;color:#1a1a1a">Off</div>
 <div class="f" style="left:193px;top:56.0px;color:#1a1a1a">Friction Filter</div>
 <div class="a" style="left:244px;top:59.0px;width:78px;height:3px;background:#e0e0e0;border:1px solid #d8d8d8"></div>
 <div class="a" style="left:244px;top:56.0px;width:4px;height:9px;background:#0078d7"></div>
 <div class="f" style="left:337px;top:56.0px;color:#1a1a1a">Off</div>
 <div class="f" style="left:193px;top:70.1px;color:#1a1a1a">Inertia Filter</div>
 <div class="a" style="left:244px;top:73.1px;width:78px;height:3px;background:#e0e0e0;border:1px solid #d8d8d8"></div>
 <div class="a" style="left:244px;top:70.1px;width:4px;height:9px;background:#0078d7"></div>
 <div class="f" style="left:337px;top:70.1px;color:#1a1a1a">Off</div>
 <div class="gb" style="left:189px;top:90px;width:179px;height:32px"></div>
 <div class="gt" style="left:219px;top:86px;width:120px;text-align:center;background:transparent"><span style="background:#f0f0f0;padding:0 2px;display:inline-block;transform:scaleX(0.87)">Desktop Effect</span></div>
<div class="a" style="left:193px;top:93px;width:46px;height:15px;background:#e1e1e1;border:1px solid #adadad"></div>
 <div class="f" style="left:197px;top:97.0px">Off</div>
 <svg class="a" style="left:229.5px;top:98.5px" width="7" height="5"><path d="M0.6 0.8L3.5 3.6L6.4 0.8" fill="none" stroke="#444" stroke-width="0.9"/></svg>
 <div class="a" style="left:244px;top:99.5px;width:78px;height:3px;background:#e0e0e0;border:1px solid #d8d8d8"></div>
 <div class="a" style="left:251px;top:96.5px;width:4.5px;height:9px;background:#cdcdcd;border:1px solid #c4c4c4"></div>
 <div class="f fr" style="left:277.5px;top:96.5px;width:80px;text-align:right;color:#a0a0a0">10.00%</div>
 <div class="f" style="left:193px;top:110.7px;color:#1a1a1a">Saturation</div>
 <div class="a" style="left:244px;top:112.8px;width:78px;height:3px;background:#e0e0e0;border:1px solid #d8d8d8"></div>
 <div class="a" style="left:299.5px;top:109.8px;width:4.5px;height:9px;background:#cdcdcd;border:1px solid #c4c4c4"></div>
 <div class="f fr" style="left:277.5px;top:109.8px;width:80px;text-align:right;color:#a0a0a0">75.00%</div>
 <div class="gb" style="left:189px;top:128px;width:179px;height:34px"></div>
 <div class="gt" style="left:219px;top:124px;width:120px;text-align:center;background:transparent"><span style="background:#f0f0f0;padding:0 2px;display:inline-block;transform:scaleX(0.87)">User Effect</span></div>
<div class="a" style="left:193px;top:131px;width:46px;height:14px;background:#e1e1e1;border:1px solid #adadad"></div>
 <div class="f" style="left:197px;top:134.5px">Off</div>
 <svg class="a" style="left:229.5px;top:136.0px" width="7" height="5"><path d="M0.6 0.8L3.5 3.6L6.4 0.8" fill="none" stroke="#444" stroke-width="0.9"/></svg>
 <div class="a" style="left:244px;top:135.9px;width:78px;height:3px;background:#e0e0e0;border:1px solid #d8d8d8"></div>
 <div class="a" style="left:251px;top:132.9px;width:4.5px;height:9px;background:#cdcdcd;border:1px solid #c4c4c4"></div>
 <div class="f fr" style="left:279px;top:132.9px;width:80px;text-align:right;color:#a0a0a0">10.00%</div>
 <div class="f" style="left:193px;top:146.9px;color:#1a1a1a">Saturation</div>
 <div class="a" style="left:244px;top:149.9px;width:78px;height:3px;background:#e0e0e0;border:1px solid #d8d8d8"></div>
 <div class="a" style="left:317.5px;top:146.9px;width:4.5px;height:9px;background:#cdcdcd;border:1px solid #c4c4c4"></div>
 <div class="f fr" style="left:279px;top:146.9px;width:80px;text-align:right;color:#a0a0a0">100.00%</div>
 <div class="gb" style="left:190px;top:167px;width:178px;height:39px"></div>
 <div class="gt" style="left:219px;top:163px;width:120px;text-align:center;background:transparent"><span style="background:#f0f0f0;padding:0 2px;display:inline-block;transform:scaleX(0.87)">FFB Configuration</span></div>
<div class="a" style="left:193px;top:175px;width:64px;height:14px;background:#e1e1e1;border:1px solid #adadad"></div>
 <div class="f" style="left:197px;top:178.5px">Eprom</div>
 <svg class="a" style="left:247.5px;top:180.0px" width="7" height="5"><path d="M0.6 0.8L3.5 3.6L6.4 0.8" fill="none" stroke="#444" stroke-width="0.9"/></svg>
 <div class="btn " style="left:262px;top:175px;width:49px;height:14px"><span class="sx">Load</span></div>
 <div class="btn " style="left:316px;top:175px;width:50px;height:14px"><span class="sx">Save</span></div>
 <div class="btn def" style="left:319px;top:212px;width:48px;height:14px"><span class="sx">Close</span></div>
</div>

<!-- Props -->
<div class="dlg" style="left:876px;top:227px;width:275px;height:302px">
 <div class="tb" style="height:20px"></div>
 <svg class="a" style="left:5px;top:5.5px" width="12" height="9" viewBox="0 0 12 9"><path d="M1 1L3 2L10 3.5L11 5.5L9 7L4 8Q1.5 7 2 4Z" fill="#50586e"/><path d="M3.5 4.5L9 4" stroke="#b8c0e8" stroke-width="1"/></svg>
 <div class="f" style="left:20px;top:6px;font-size:9px;color:#9a9a9a;transform:scaleX(0.875)">Свойства: MMos ForceFeedback 2014</div>
 <svg class="a" style="left:261px;top:6px" width="9" height="9"><path d="M0.5 0.5L8.5 8.5M8.5 0.5L0.5 8.5" stroke="#888" stroke-width="1"/></svg>
 <div class="a" style="left:5px;top:28px;width:47px;height:11px;background:#f0f0f0;border:1px solid #d9d9d9;border-bottom:0"></div>
 <div class="f" style="left:9px;top:29.5px">Параметры</div>
 <div class="a" style="left:4px;top:38px;width:266px;height:240px;background:#fff;border:1px solid #d9d9d9"></div>
 <div class="a" style="left:51px;top:26px;width:44px;height:13px;background:#fff;border:1px solid #d9d9d9;border-bottom:0"></div>
 <div class="f" style="left:55px;top:28px">Проверка</div>
 <div class="f" style="left:12px;top:47px">Проверьте игровое устройство. Если оно работает неправильно,</div>
 <div class="f" style="left:12px;top:56px">произведите калибровку на странице параметров.</div>
 <div class="gb" style="left:10px;top:72px;width:253px;height:86px"></div>
 <div class="gt" style="left:14px;top:68px;background:#fff;transform:scaleX(0.87);transform-origin:0 0">Оси устройства</div>
 <div class="a" style="left:15px;top:93px;width:63px;height:43px;border:1px solid #a0a0a0;background:#fff"></div>
 <svg class="a" style="left:42px;top:112px" width="7" height="7"><path d="M0 3.5H7M3.5 0V7" stroke="#222" stroke-width="0.9"/></svg>
 <div class="f" style="left:22px;top:142.7px;color:#1a1a1a">Ось X / Ось Y</div>
 <svg class="a" style="left:84px;top:77px" width="2" height="49"><path d="M1 0V10M1 13V23M1 26V36M1 39V48" stroke="#f07888" stroke-width="1.5"/></svg>
 <div class="f" style="left:152.5px;top:77.8px;color:#1a1a1a">Ось Z</div>
 <div class="f" style="left:152.5px;top:90.5px;color:#1a1a1a">Вращение вокруг оси X</div>
 <div class="f" style="left:152.5px;top:103.8px;color:#1a1a1a">Вращение вокруг оси Y</div>
 <div class="f" style="left:152.5px;top:116.3px;color:#1a1a1a">Вращение вокруг оси Z</div>
 <div class="gb" style="left:10px;top:168px;width:167px;height:102px"></div>
 <div class="gt" style="left:14px;top:164px;background:#fff;transform:scaleX(0.87);transform-origin:0 0">Кнопки</div>
 <div class="gb" style="left:182px;top:168px;width:83px;height:103px"></div>
 <div class="gt" style="left:187px;top:164px;background:#fff;transform:scaleX(0.87);transform-origin:0 0">Переключатель вида</div>
 <svg class="a" style="left:0;top:0" width="275" height="300"><circle cx="24.3" cy="188.7" r="5.8" fill="#7a0808" stroke="#1a0000" stroke-width="0.8"/><text x="24.3" y="191.2" font-family="Liberation Sans" font-size="6.8" font-weight="bold" text-anchor="middle" fill="#000">1</text><circle cx="44.3" cy="188.7" r="5.8" fill="#7a0808" stroke="#1a0000" stroke-width="0.8"/><text x="44.3" y="191.2" font-family="Liberation Sans" font-size="6.8" font-weight="bold" text-anchor="middle" fill="#000">2</text><circle cx="64.3" cy="188.7" r="5.8" fill="#7a0808" stroke="#1a0000" stroke-width="0.8"/><text x="64.3" y="191.2" font-family="Liberation Sans" font-size="6.8" font-weight="bold" text-anchor="middle" fill="#000">3</text><circle cx="84.3" cy="188.7" r="5.8" fill="#7a0808" stroke="#1a0000" stroke-width="0.8"/><text x="84.3" y="191.2" font-family="Liberation Sans" font-size="6.8" font-weight="bold" text-anchor="middle" fill="#000">4</text><circle cx="104.3" cy="188.7" r="5.8" fill="#7a0808" stroke="#1a0000" stroke-width="0.8"/><text x="104.3" y="191.2" font-family="Liberation Sans" font-size="6.8" font-weight="bold" text-anchor="middle" fill="#000">5</text><circle cx="124.3" cy="188.7" r="5.8" fill="#7a0808" stroke="#1a0000" stroke-width="0.8"/><text x="124.3" y="191.2" font-family="Liberation Sans" font-size="6.8" font-weight="bold" text-anchor="middle" fill="#000">6</text><circle cx="144.3" cy="188.7" r="5.8" fill="#7a0808" stroke="#1a0000" stroke-width="0.8"/><text x="144.3" y="191.2" font-family="Liberation Sans" font-size="6.8" font-weight="bold" text-anchor="middle" fill="#000">7</text><circle cx="164.3" cy="188.7" r="5.8" fill="#7a0808" stroke="#1a0000" stroke-width="0.8"/><text x="164.3" y="191.2" font-family="Liberation Sans" font-size="6.8" font-weight="bold" text-anchor="middle" fill="#000">8</text><circle cx="24.3" cy="210.7" r="5.8" fill="#7a0808" stroke="#1a0000" stroke-width="0.8"/><text x="24.3" y="213.2" font-family="Liberation Sans" font-size="6.8" font-weight="bold" text-anchor="middle" fill="#000">9</text><circle cx="44.3" cy="210.7" r="5.8" fill="#7a0808" stroke="#1a0000" stroke-width="0.8"/><text x="44.3" y="213.2" font-family="Liberation Sans" font-size="6.8" font-weight="bold" text-anchor="middle" fill="#000">10</text><circle cx="64.3" cy="210.7" r="5.8" fill="#7a0808" stroke="#1a0000" stroke-width="0.8"/><text x="64.3" y="213.2" font-family="Liberation Sans" font-size="6.8" font-weight="bold" text-anchor="middle" fill="#000">11</text><circle cx="84.3" cy="210.7" r="5.8" fill="#7a0808" stroke="#1a0000" stroke-width="0.8"/><text x="84.3" y="213.2" font-family="Liberation Sans" font-size="6.8" font-weight="bold" text-anchor="middle" fill="#000">12</text><circle cx="104.3" cy="210.7" r="5.8" fill="#7a0808" stroke="#1a0000" stroke-width="0.8"/><text x="104.3" y="213.2" font-family="Liberation Sans" font-size="6.8" font-weight="bold" text-anchor="middle" fill="#000">13</text><circle cx="124.3" cy="210.7" r="5.8" fill="#7a0808" stroke="#1a0000" stroke-width="0.8"/><text x="124.3" y="213.2" font-family="Liberation Sans" font-size="6.8" font-weight="bold" text-anchor="middle" fill="#000">14</text><circle cx="144.3" cy="210.7" r="5.8" fill="#7a0808" stroke="#1a0000" stroke-width="0.8"/><text x="144.3" y="213.2" font-family="Liberation Sans" font-size="6.8" font-weight="bold" text-anchor="middle" fill="#000">15</text><circle cx="164.3" cy="210.7" r="5.8" fill="#7a0808" stroke="#1a0000" stroke-width="0.8"/><text x="164.3" y="213.2" font-family="Liberation Sans" font-size="6.8" font-weight="bold" text-anchor="middle" fill="#000">16</text><circle cx="24.3" cy="232" r="5.8" fill="#7a0808" stroke="#1a0000" stroke-width="0.8"/><text x="24.3" y="234.5" font-family="Liberation Sans" font-size="6.8" font-weight="bold" text-anchor="middle" fill="#000">17</text><circle cx="44.3" cy="232" r="5.8" fill="#7a0808" stroke="#1a0000" stroke-width="0.8"/><text x="44.3" y="234.5" font-family="Liberation Sans" font-size="6.8" font-weight="bold" text-anchor="middle" fill="#000">18</text><circle cx="64.3" cy="232" r="5.8" fill="#7a0808" stroke="#1a0000" stroke-width="0.8"/><text x="64.3" y="234.5" font-family="Liberation Sans" font-size="6.8" font-weight="bold" text-anchor="middle" fill="#000">19</text><circle cx="84.3" cy="232" r="5.8" fill="#7a0808" stroke="#1a0000" stroke-width="0.8"/><text x="84.3" y="234.5" font-family="Liberation Sans" font-size="6.8" font-weight="bold" text-anchor="middle" fill="#000">20</text><circle cx="104.3" cy="232" r="5.8" fill="#7a0808" stroke="#1a0000" stroke-width="0.8"/><text x="104.3" y="234.5" font-family="Liberation Sans" font-size="6.8" font-weight="bold" text-anchor="middle" fill="#000">21</text><circle cx="124.3" cy="232" r="5.8" fill="#7a0808" stroke="#1a0000" stroke-width="0.8"/><text x="124.3" y="234.5" font-family="Liberation Sans" font-size="6.8" font-weight="bold" text-anchor="middle" fill="#000">22</text><circle cx="144.3" cy="232" r="5.8" fill="#7a0808" stroke="#1a0000" stroke-width="0.8"/><text x="144.3" y="234.5" font-family="Liberation Sans" font-size="6.8" font-weight="bold" text-anchor="middle" fill="#000">23</text><circle cx="164.3" cy="232" r="5.8" fill="#7a0808" stroke="#1a0000" stroke-width="0.8"/><text x="164.3" y="234.5" font-family="Liberation Sans" font-size="6.8" font-weight="bold" text-anchor="middle" fill="#000">24</text><circle cx="24.3" cy="254.3" r="5.8" fill="#7a0808" stroke="#1a0000" stroke-width="0.8"/><text x="24.3" y="256.8" font-family="Liberation Sans" font-size="6.8" font-weight="bold" text-anchor="middle" fill="#000">25</text><circle cx="44.3" cy="254.3" r="5.8" fill="#7a0808" stroke="#1a0000" stroke-width="0.8"/><text x="44.3" y="256.8" font-family="Liberation Sans" font-size="6.8" font-weight="bold" text-anchor="middle" fill="#000">26</text><circle cx="64.3" cy="254.3" r="5.8" fill="#7a0808" stroke="#1a0000" stroke-width="0.8"/><text x="64.3" y="256.8" font-family="Liberation Sans" font-size="6.8" font-weight="bold" text-anchor="middle" fill="#000">27</text><circle cx="84.3" cy="254.3" r="5.8" fill="#7a0808" stroke="#1a0000" stroke-width="0.8"/><text x="84.3" y="256.8" font-family="Liberation Sans" font-size="6.8" font-weight="bold" text-anchor="middle" fill="#000">28</text><circle cx="104.3" cy="254.3" r="5.8" fill="#7a0808" stroke="#1a0000" stroke-width="0.8"/><text x="104.3" y="256.8" font-family="Liberation Sans" font-size="6.8" font-weight="bold" text-anchor="middle" fill="#000">29</text><circle cx="124.3" cy="254.3" r="5.8" fill="#e01818" stroke="#1a0000" stroke-width="0.8"/><text x="124.3" y="256.8" font-family="Liberation Sans" font-size="6.8" font-weight="bold" text-anchor="middle" fill="#000">30</text><circle cx="144.3" cy="254.3" r="5.8" fill="#7a0808" stroke="#1a0000" stroke-width="0.8"/><text x="144.3" y="256.8" font-family="Liberation Sans" font-size="6.8" font-weight="bold" text-anchor="middle" fill="#000">31</text><circle cx="164.3" cy="254.3" r="5.8" fill="#7a0808" stroke="#1a0000" stroke-width="0.8"/><text x="164.3" y="256.8" font-family="Liberation Sans" font-size="6.8" font-weight="bold" text-anchor="middle" fill="#000">32</text><circle cx="222.6" cy="221.5" r="24" fill="none" stroke="#222" stroke-width="0.9"/><circle cx="222.6" cy="221.5" r="4.3" fill="#3a3a3a"/></svg>
 <div class="btn " style="left:114px;top:283px;width:49px;height:14px"><span class="sx">OK</span></div>
 <div class="btn " style="left:168px;top:283px;width:49px;height:14px"><span class="sx">Отмена</span></div>
 <div class="btn dis" style="left:222px;top:283px;width:49px;height:14px"><span class="sx">Применить</span></div>
</div>
<!-- taskbar -->
<div class="a" style="left:0;top:693px;width:1280px;height:27px;background:linear-gradient(90deg,#0d0b0b 0,#0f0d0c 460px,#24180e 520px,#3a2412 580px,#2e1a10 630px,#22120e 700px,#1c0f0d 780px,#131010 880px,#0d0c0b 960px,#0b0a0a 1280px)"></div>
<svg class="a" style="left:0;top:693px" width="1280" height="27" viewBox="0 693 1280 27">
 <!-- windows logo -->
 <path d="M10.5 702L15.5 701.3V706.2H10.5ZM16.3 701.2L21.6 700.5V706.2H16.3ZM10.5 707H15.5V711.8L10.5 711.1ZM16.3 707H21.6V712.6L16.3 711.9Z" fill="#fff"/>
 <!-- search -->
 <circle cx="50.3" cy="704.5" r="3.6" fill="none" stroke="#fff" stroke-width="1"/><path d="M47.6 707.3L43.5 711.4" stroke="#fff" stroke-width="1.1"/>
 <!-- task view -->
 <path d="M75 702H83M75 711H83M75.5 703V710M82.5 703V710" stroke="#fff" stroke-width="1"/><rect x="84.5" y="703" width="1.5" height="1.5" fill="#fff"/><rect x="84.5" y="706" width="1.5" height="5" fill="#fff"/><rect x="74" y="702" width="1" height="1" fill="#fff"/>
 <!-- edge -->
 <path d="M109.5 707.5Q109 701.5 114.5 700.8Q119.8 700.8 120.3 706.5V707.8H112Q112.5 711 116 711Q118.5 711 120 710.3V712.3Q118 713 115.5 713Q110 713 109.5 707.5ZM112 705.8H117.8Q117.5 703 115 703Q112.5 703.2 112 705.8Z" fill="#1f8ae8"/>
 <!-- explorer -->
 <path d="M139.5 701.5H145L146.5 703H154.5V711.5H139.5Z" fill="#f2c94c"/><rect x="139.5" y="704" width="15" height="7.5" fill="#f8dc7c"/><path d="M144 708H150V711.5H148.5V709.5H145.5V711.5H144Z" fill="#2b8ee0"/>
 <!-- chrome -->
 <circle cx="179.5" cy="706.5" r="7" fill="#e04436"/><path d="M179.5 706.5L173.4 710L176 713A7 7 0 0 0 186.5 706.5Z" fill="#2da44e"/><path d="M179.5 706.5L186.5 706.5A7 7 0 0 1 176 713L179.5 706.5L173.4 710A7 7 0 0 1 173 703.5Z" fill="#f7c12a"/><path d="M172.6 704.3A7 7 0 0 0 176.2 712.8L179.5 706.5Z" fill="#2da44e"/><circle cx="179.5" cy="706.5" r="3.2" fill="#fff"/><circle cx="179.5" cy="706.5" r="2.4" fill="#3c84f0"/>
 <!-- store -->
 <path d="M204 703.5H219V713H204Z" fill="#f4f4f4"/><path d="M208.5 703.5V702Q208.5 699.5 211.5 699.5Q214.5 699.5 214.5 702V703.5" fill="none" stroke="#e8e8e8" stroke-width="1"/><rect x="208" y="705.5" width="3" height="3" fill="#f25022"/><rect x="212" y="705.5" width="3" height="3" fill="#7fba00"/><rect x="208" y="709" width="3" height="3" fill="#00a4ef"/><rect x="212" y="709" width="3" height="3" fill="#ffb900"/>
 <!-- itunes -->
 <circle cx="244.7" cy="706.2" r="7" fill="#f4f0f6"/><circle cx="244.7" cy="706.2" r="6.6" fill="none" stroke="#e8d0e8" stroke-width="0.8"/>
 <path d="M242.6 709.3V702.6L247.6 701.6V708.3" fill="none" stroke="#c04090" stroke-width="1.3"/><path d="M242.6 702.6L247.6 701.6" stroke="#e04050" stroke-width="1.3"/>
 <circle cx="241.6" cy="709.4" r="1.4" fill="#7040d0"/><circle cx="246.6" cy="708.4" r="1.4" fill="#4060e0"/>
 <!-- 4th app -->
 <rect x="270" y="701.5" width="14" height="10" fill="#78c8f0"/><rect x="271" y="702.5" width="12" height="8" fill="#98d8f8"/>
 <path d="M272.5 704.5H275M273 707H276M278 704H281.5M278.5 707.5H281.5" stroke="#2060a0" stroke-width="1.1"/><rect x="276" y="708" width="2" height="2" fill="#e8c040"/>
 <!-- active app bg -->
 <rect x="294" y="693" width="32" height="27" fill="#3b3a3a"/>
 <circle cx="310" cy="706.5" r="6.5" fill="none" stroke="#262626" stroke-width="2"/><path d="M304 705.5Q310 703.5 316 705.5M310 706V713" stroke="#262626" stroke-width="2" fill="none"/>
 <!-- gamepad -->
 <path d="M335.5 710Q336 704 342 703L349.5 704.5Q350 710 347 711L343 707.5L338.5 712Z" fill="#5a6470"/><path d="M337 706Q340 703 343 703L349.5 704.5L348 707L342 705.5Z" fill="#c8dcf0"/>
 <!-- running underlines -->
 <g fill="#e8d0b0"><rect x="133" y="718.5" width="27" height="1.5"/><rect x="166" y="718.5" width="27" height="1.5"/><rect x="231" y="718.5" width="27" height="1.5"/><rect x="264" y="718.5" width="27" height="1.5"/><rect x="296" y="718.5" width="28" height="1.5"/><rect x="329" y="718.5" width="27" height="1.5"/></g>
 <!-- tray -->
 <g stroke="#fff" fill="none" stroke-width="0.9">
  <circle cx="1095" cy="706" r="1.6"/><path d="M1092 711.5Q1092.5 708 1095 708Q1097.5 708 1098 711.5"/>
  <circle cx="1099" cy="703.2" r="1.6"/><path d="M1097 707.5Q1097.5 705.2 1099 705.2Q1101.5 705.2 1102 708.5"/>
  <path d="M1116.5 708.5L1120.8 704.3L1125 708.5" stroke-width="1"/>
  <path d="M1147.5 704.5H1150L1153 701.8V711.2L1150 708.5H1147.5Z"/><path d="M1154.8 704.3Q1156 706.5 1154.8 708.7M1156.5 702.8Q1158.5 706.5 1156.5 710.2"/>
  <rect x="1164.5" y="702" width="10" height="7"/><path d="M1167 711H1173M1170 709V711M1163 701.5V707"/>
 </g>
 <path d="M1132 709.8Q1131 706.5 1134.5 706.5Q1136 703.5 1139 704.5Q1142.5 705.2 1142.2 708Q1143 709.8 1141 709.8Z" fill="#fff"/>
 <path d="M1252.5 701.5H1264V710H1257L1254.5 712V710H1252.5Z" fill="none" stroke="#fff" stroke-width="0.9"/>
 <rect x="1275.5" y="693" width="1" height="27" fill="#3c3c3c"/>
</svg>
<div class="t" style="left:1181px;top:702.2px;font-size:8.8px;color:#fff;transform:scaleX(0.86);transform-origin:0 0">ENG</div>
<div class="t" style="left:1214px;top:696.5px;font-size:8.8px;color:#fff;transform:scaleX(0.86);transform-origin:0 0">12:39</div>
<div class="t" style="left:1205px;top:708.5px;font-size:8.8px;color:#fff;transform:scaleX(0.81);transform-origin:0 0">13.08.2019</div>

</body></html>
